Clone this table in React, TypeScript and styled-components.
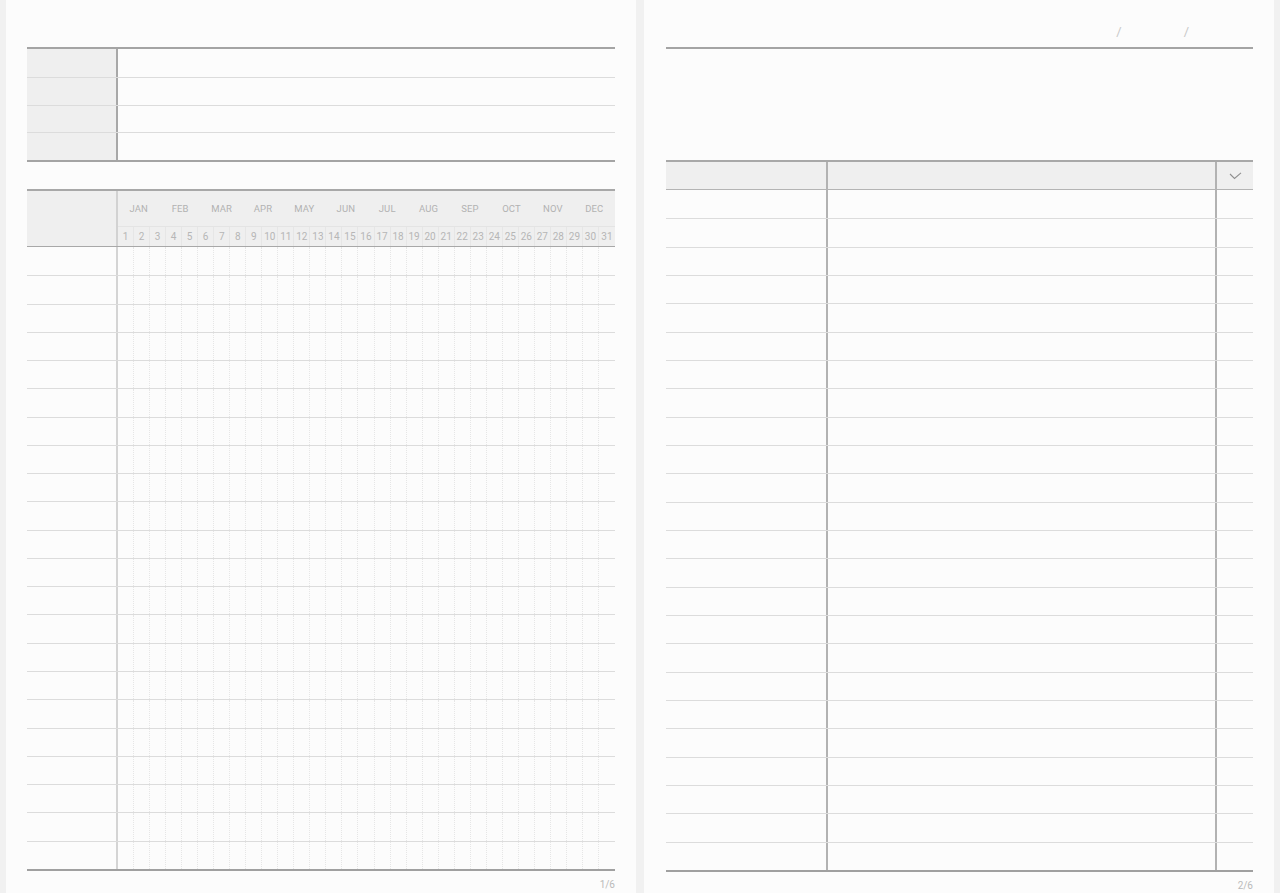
import React from 'react'
import styled, { createGlobalStyle } from 'styled-components'

const MONTHS = ['JAN', 'FEB', 'MAR', 'APR', 'MAY', 'JUN', 'JUL', 'AUG', 'SEP', 'OCT', 'NOV', 'DEC']
const DAYS = Array.from({ length: 31 }, (_, i) => i + 1)

const GlobalStyle = createGlobalStyle`
  html, body {
    margin: 0;
    padding: 0;
    background: #f1f1f1;
    font-family: Roboto, 'Liberation Sans', sans-serif;
  }
  * {
    box-sizing: border-box;
  }
`

const App = (): React.ReactElement => (
  <>
    <GlobalStyle />
    <Spread>
      <Page $top={47} $left={21}>
        <InfoTable>
          {[0, 1, 2, 3].map((r) => (
            <InfoRow key={r}>
              <InfoLabel />
              <InfoField />
            </InfoRow>
          ))}
        </InfoTable>

        <Calendar>
          <CalHead>
            <HeadLabel />
            <HeadRight>
              <MonthRow>
                {MONTHS.map((m) => (
                  <Month key={m}>{m}</Month>
                ))}
              </MonthRow>
              <DayRow>
                {DAYS.map((d) => (
                  <Day key={d}>{d}</Day>
                ))}
              </DayRow>
            </HeadRight>
          </CalHead>
          {Array.from({ length: 22 }, (_, r) => (
            <CalRow key={r}>
              <CalLabel />
              <DayCells>
                {DAYS.map((d) => (
                  <DayCell key={d} />
                ))}
              </DayCells>
            </CalRow>
          ))}
        </Calendar>
        <PageNo>1/6</PageNo>
      </Page>

      <Page $top={0} $left={22}>
        <DateRow>
          <Slash>/</Slash>
          <Slash>/</Slash>
        </DateRow>

        <TaskTable>
          <TaskHead>
            <TaskCell />
            <TaskCell />
            <CheckCell>
              <svg width="13" height="8" viewBox="0 0 13 8">
                <polyline points="1,2 5.5,6.5 12,0.8" fill="none" stroke="#8f8f8f" strokeWidth="1.1" />
              </svg>
            </CheckCell>
          </TaskHead>
          {Array.from({ length: 24 }, (_, r) => (
            <TaskRow key={r}>
              <TaskCell />
              <TaskCell />
              <TaskCell />
            </TaskRow>
          ))}
        </TaskTable>
        <PageNo>2/6</PageNo>
      </Page>
    </Spread>
  </>
)

export default App

const Spread = styled.div`
  display: flex;
  gap: 8px;
  padding: 0 6px;
  height: 893px;
  overflow: hidden;
`

const Page = styled.div<{ $top: number; $left: number }>`
  width: 630px;
  height: 100%;
  background: #fcfcfc;
  padding: ${(p) => p.$top}px 21px 0 ${(p) => p.$left}px;
  display: flex;
  flex-direction: column;

  & > * {
    flex-shrink: 0;
  }
`

const InfoTable = styled.div`
  border-top: 2px solid #a4a4a4;
  border-bottom: 2px solid #a4a4a4;
`

const InfoRow = styled.div`
  display: grid;
  grid-template-columns: 91px 1fr;
  height: 27.75px;

  & + & {
    border-top: 1px solid #dcdcdc;
  }
`

const InfoLabel = styled.div`
  background: #efefef;
  border-right: 2px solid #a8a8a8;
`

const InfoField = styled.div``

const Calendar = styled.div`
  margin-top: 27px;
  border-top: 2px solid #a8a8a8;
  border-bottom: 2px solid #a0a0a0;
`

const CalHead = styled.div`
  display: grid;
  grid-template-columns: 91px 1fr;
  background: #efefef;
  border-bottom: 1px solid #a8a8a8;
`

const HeadLabel = styled.div`
  border-right: 2px solid #d2d2d2;
`

const HeadRight = styled.div`
  display: flex;
  flex-direction: column;
`

const MonthRow = styled.div`
  display: grid;
  grid-template-columns: repeat(12, 1fr);
  height: 36px;
  border-bottom: 1px solid #e4e4e4;
`

const Month = styled.div`
  display: flex;
  align-items: center;
  justify-content: center;
  font-size: 9.5px;
  color: #b2b2b2;
  letter-spacing: 0.1px;
`

const DayRow = styled.div`
  display: grid;
  grid-template-columns: repeat(31, 1fr);
  height: 19px;
`

const Day = styled.div`
  display: flex;
  align-items: center;
  justify-content: center;
  font-size: 10px;
  color: #b6b6b6;
  border-right: 1px solid #e6e6e6;

  &:last-child {
    border-right: none;
  }
`

const CalRow = styled.div`
  display: grid;
  grid-template-columns: 91px 1fr;
  height: 28.27px;

  & + & {
    border-top: 1px solid #dcdcdc;
  }
`

const CalLabel = styled.div`
  border-right: 2px solid #d4d4d4;
`

const DayCells = styled.div`
  display: grid;
  grid-template-columns: repeat(31, 1fr);
`

const DayCell = styled.div`
  border-right: 1px dotted #e6e6e6;

  &:last-child {
    border-right: none;
  }
`

const PageNo = styled.div`
  margin-top: 8px;
  text-align: right;
  font-size: 10px;
  color: #bababa;
`

const DateRow = styled.div`
  display: flex;
  justify-content: flex-end;
  align-items: flex-end;
  gap: 62px;
  height: 49px;
  padding: 0 64px 9px 0;
  border-bottom: 2px solid #a4a4a4;
`

const Slash = styled.span`
  font-size: 13px;
  line-height: 13px;
  color: #c8c8c8;
`

const TaskTable = styled.div`
  margin-top: 111px;
  border-top: 2px solid #a8a8a8;
  border-bottom: 2px solid #a0a0a0;
`

const TaskHead = styled.div`
  display: grid;
  grid-template-columns: 162px 389px 1fr;
  height: 28px;
  background: #efefef;
  border-bottom: 1px solid #b4b4b4;
`

const TaskRow = styled.div`
  display: grid;
  grid-template-columns: 162px 389px 1fr;
  height: 28.33px;

  & + & {
    border-top: 1px solid #dcdcdc;
  }
`

const TaskCell = styled.div`
  border-right: 2px solid #b2b2b2;

  &:last-child {
    border-right: none;
  }
`

const CheckCell = styled.div`
  display: flex;
  align-items: center;
  justify-content: center;
`
